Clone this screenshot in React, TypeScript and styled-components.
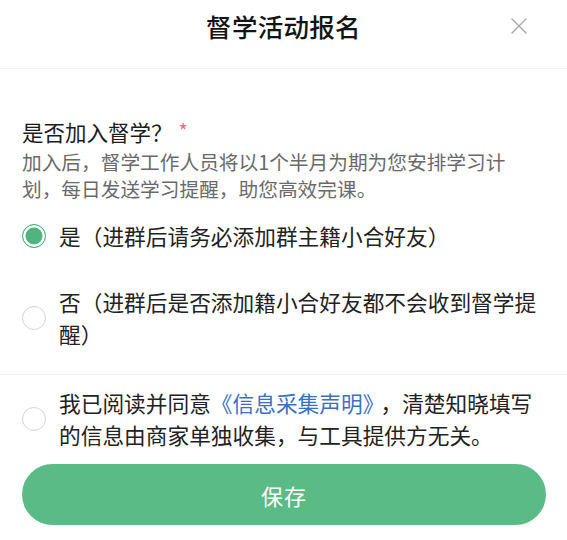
import React, { useState } from "react";
import styled, { createGlobalStyle, css } from "styled-components";

const Global = createGlobalStyle`
  html, body { margin: 0; padding: 0; background: #ffffff; }
  body { font-family: "Noto Sans CJK SC", "Noto Sans", sans-serif; }
  * { box-sizing: border-box; }
`;

const Page = styled.div`
  width: 567px;
  height: 540px;
  background: #fff;
  display: flex;
  flex-direction: column;
  overflow: hidden;
`;

const Header = styled.header`
  position: relative;
  height: 69px;
  padding-top: 9px;
  display: flex;
  justify-content: center;
  align-items: flex-start;
  border-bottom: 1px solid #efefef;
`;

const Title = styled.h1`
  margin: 0;
  font-size: 25.5px;
  line-height: 34px;
  font-weight: 500;
  color: #141414;
  letter-spacing: 0.3px;
`;

const Close = styled.button`
  position: absolute;
  top: 18px;
  right: 40px;
  width: 16px;
  height: 16px;
  padding: 0;
  border: 0;
  background: none;
  display: flex;
`;

const Section = styled.section`
  padding: 48px 22px 0 22px;
  display: flex;
  flex-direction: column;
`;

const Label = styled.div`
  font-size: 21.5px;
  line-height: 30px;
  color: #1c1c1c;
  display: flex;
  align-items: flex-start;
`;

const Required = styled.span`
  color: #e4737a;
  font-size: 20px;
  line-height: 28px;
  margin-left: 6px;
`;

const Description = styled.p`
  margin: 2px 0 0 0;
  max-width: 500px;
  font-size: 19.7px;
  line-height: 26.5px;
  color: #6a6a6a;
`;

const Options = styled.div`
  display: flex;
  flex-direction: column;
  gap: 34px;
  margin-top: 18px;
`;

const Row = styled.label`
  display: flex;
  align-items: center;
  gap: 13px;
  cursor: pointer;
`;

const RowText = styled.span`
  flex: 1;
  font-size: 21.7px;
  line-height: 32px;
  color: #222;
`;

const Radio = styled.span<{ $checked: boolean }>`
  flex: none;
  width: 24px;
  height: 24px;
  border-radius: 50%;
  border: 1.5px solid #d4d4d4;
  background: #fff;
  ${(p) =>
    p.$checked &&
    css`
      border: 1.5px solid #4fb47f;
      background: #4fb47f;
      box-shadow: inset 0 0 0 2.5px #fff;
    `}
`;

const Divider = styled.hr`
  margin: 24px 0 0 0;
  border: 0;
  border-top: 1px solid #eeeeee;
`;

const Agreement = styled.div`
  padding: 12px 22px 0 22px;
`;

const Link = styled.a`
  color: #3b6fc6;
  text-decoration: none;
  margin-right: 7px;
`;

const Footer = styled.div`
  padding: 13px 21px 0 22px;
`;

const SaveButton = styled.button`
  width: 100%;
  height: 61px;
  border: 0;
  border-radius: 31px;
  background: #5bbb87;
  color: #fff;
  font-family: inherit;
  font-size: 22px;
  letter-spacing: 1px;
  cursor: pointer;
`;

export default function App() {
  const [join, setJoin] = useState<"yes" | "no">("yes");
  const [agree, setAgree] = useState(false);

  return (
    <Page>
      <Global />
      <Header>
        <Title>督学活动报名</Title>
        <Close aria-label="关闭">
          <svg width="16" height="16" viewBox="0 0 16 16">
            <path d="M1 1 L15 15 M15 1 L1 15" stroke="#a9a9a9" strokeWidth="1.4" strokeLinecap="round" />
          </svg>
        </Close>
      </Header>
      <Section>
        <Label>
          是否加入督学？<Required>*</Required>
        </Label>
        <Description>
          加入后，督学工作人员将以1个半月为期为您安排学习计划，每日发送学习提醒，助您高效完课。
        </Description>
        <Options>
          <Row onClick={() => setJoin("yes")}>
            <Radio $checked={join === "yes"} />
            <RowText>是（进群后请务必添加群主籍小合好友）</RowText>
          </Row>
          <Row onClick={() => setJoin("no")}>
            <Radio $checked={join === "no"} />
            <RowText>否（进群后是否添加籍小合好友都不会收到督学提醒）</RowText>
          </Row>
        </Options>
      </Section>
      <Divider />
      <Agreement>
        <Row onClick={() => setAgree(!agree)}>
          <Radio $checked={agree} />
          <RowText>
            我已阅读并同意<Link>《信息采集声明》</Link>，清楚知晓填写的信息由商家单独收集，与工具提供方无关。
          </RowText>
        </Row>
      </Agreement>
      <Footer>
        <SaveButton>保存</SaveButton>
      </Footer>
    </Page>
  );
}
